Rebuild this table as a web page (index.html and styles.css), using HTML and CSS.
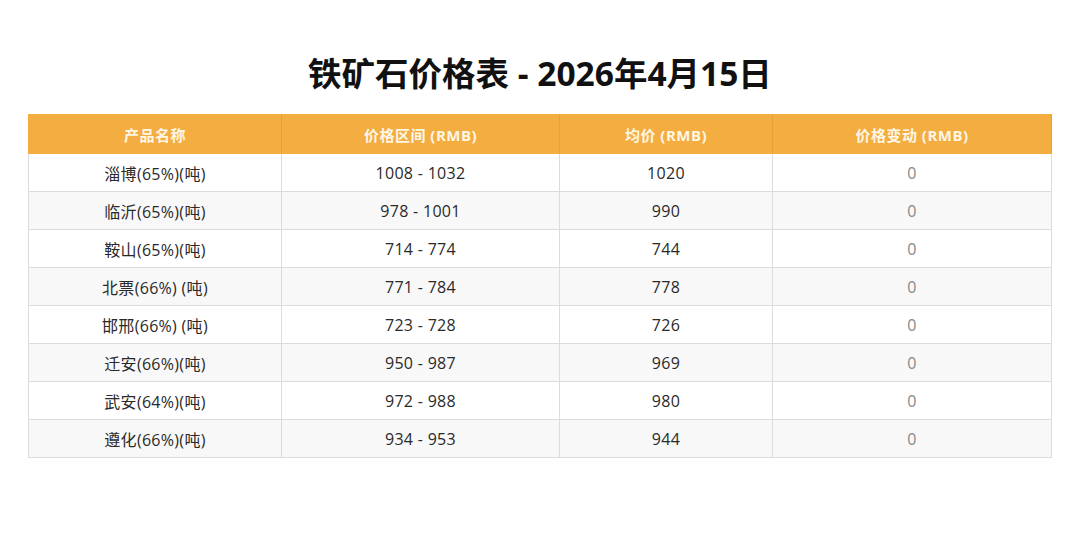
FILE: index.html
```html
<!DOCTYPE html>
<html lang="zh-CN">
<head>
<meta charset="utf-8">
<title>铁矿石价格表</title>
<link rel="stylesheet" href="styles.css">
</head>
<body>
<div class="page">
  <h1 class="title">铁矿石价格表 - 2026年4月15日</h1>
  <table class="price-table">
    <colgroup>
      <col class="c1"><col class="c2"><col class="c3"><col class="c4">
    </colgroup>
    <thead>
      <tr><th>产品名称</th><th>价格区间 (RMB)</th><th>均价 (RMB)</th><th>价格变动 (RMB)</th></tr>
    </thead>
    <tbody>
      <tr><td>淄博(65%)(吨)</td><td>1008 - 1032</td><td>1020</td><td class="chg">0</td></tr>
      <tr><td>临沂(65%)(吨)</td><td>978 - 1001</td><td>990</td><td class="chg">0</td></tr>
      <tr><td>鞍山(65%)(吨)</td><td>714 - 774</td><td>744</td><td class="chg">0</td></tr>
      <tr><td>北票(66%) (吨)</td><td>771 - 784</td><td>778</td><td class="chg">0</td></tr>
      <tr><td>邯邢(66%) (吨)</td><td>723 - 728</td><td>726</td><td class="chg">0</td></tr>
      <tr><td>迁安(66%)(吨)</td><td>950 - 987</td><td>969</td><td class="chg">0</td></tr>
      <tr><td>武安(64%)(吨)</td><td>972 - 988</td><td>980</td><td class="chg">0</td></tr>
      <tr><td>遵化(66%)(吨)</td><td>934 - 953</td><td>944</td><td class="chg">0</td></tr>
    </tbody>
  </table>
</div>
</body>
</html>
```
FILE: styles.css
```css
html, body {
  margin: 0;
  padding: 0;
  background: #ffffff;
}
body {
  font-family: "Open Sans", "Noto Sans CJK SC", sans-serif;
  color: #222;
}
.page {
  padding: 50px 28px 0 28px;
  display: flex;
  flex-direction: column;
  align-items: center;
}
.title {
  margin: 0;
  font-size: 33.5px;
  font-weight: 700;
  line-height: 46px;
  color: #111;
}
.price-table {
  margin-top: 18px;
  width: 1024px;
  border-collapse: collapse;
  table-layout: fixed;
  font-size: 16px;
  letter-spacing: 0.3px;
}
.c1 { width: 253px; }
.c2 { width: 278px; }
.c3 { width: 213px; }
.c4 { width: 279px; }
.price-table th {
  background: #f3ad40;
  color: #fff6e6;
  font-weight: 700;
  font-size: 15px;
  letter-spacing: 0.5px;
  height: 38px;
  padding: 0;
  border: 1px solid #f3ad40;
  border-right-color: #e6a23a;
  text-align: center;
}
.price-table td {
  height: 37px;
  padding: 0;
  text-align: center;
  border: 1px solid #dcdcdc;
  color: #2a2a2a;
}
.price-table tbody tr:nth-child(even) td {
  background: #f8f8f8;
}
.price-table td.chg {
  color: #888;
}
```
